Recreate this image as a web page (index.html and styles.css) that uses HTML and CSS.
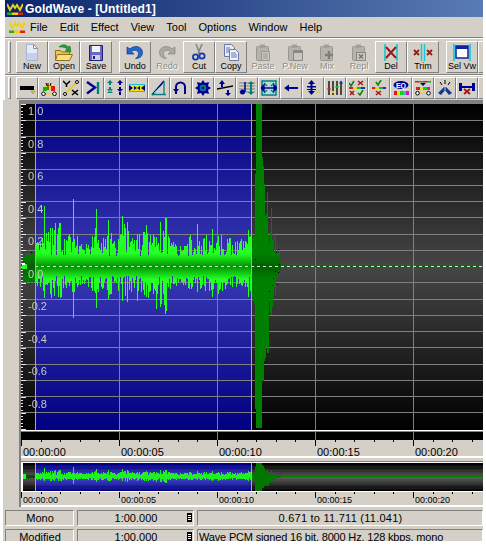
FILE: index.html
```html
<!DOCTYPE html>
<html lang="en">
<head>
    <meta charset="UTF-8">
    <title>GoldWave - [Untitled1]</title>
    <link rel="stylesheet" href="styles.css">
</head>
<body>
    <svg class="defs" width="0" height="0">
        <symbol id="logo" viewBox="0 0 16 12">
            <polyline points="0,1 3,7 6,2 8,5 10,2 13,7 16,1" fill="none" stroke="#e8d020" stroke-width="2"/>
            <rect x="0" y="9.5" width="5" height="2.5" fill="#20b020"/>
            <rect x="5" y="9.5" width="6" height="2.5" fill="#f0d000"/>
            <rect x="11" y="9.5" width="5" height="2.5" fill="#e02010"/>
        </symbol>
        <symbol id="i-new" viewBox="0 0 20 17">
            <path d="M4.5.5h7l4 4v12h-11z" fill="#e4ecfa" stroke="#a8b4d0"/>
            <path d="M11.5.5v4h4z" fill="#fff" stroke="#8090b0"/>
            <rect x="5" y="9" width="10" height="7" fill="#c4d2ee"/>
        </symbol>
        <symbol id="i-open" viewBox="0 0 20 17">
            <path d="M1.5 6.500h5l1 1.500h8v8h-14z" fill="#f0c850" stroke="#907020"/>
            <path d="M1.500 16.500l2-6h15l-3 6z" fill="#fce080" stroke="#907020"/>
            <path d="M5 3c3-3 7-3 9 0l2-1 1 6-6-1 2-2c-2-2-5-2-8-2z" fill="#20a030" stroke="#107018" stroke-width=".5"/>
        </symbol>
        <symbol id="i-save" viewBox="0 0 20 17">
            <path d="M3.500 1.500h13v15h-13z" fill="#6868c8" stroke="#202080"/>
            <rect x="6" y="2" width="8" height="6" fill="#f4f4f4"/>
            <rect x="6" y="11" width="8" height="5" fill="#d0d0d8"/>
            <rect x="7" y="12" width="2" height="3" fill="#202080"/>
        </symbol>
        <symbol id="i-undo" viewBox="0 0 20 17">
            <path d="M2 3v7h7l-2.500-2.500c3-2.500 7-1 7 2 0 2-1 4-3 5 5 0 7-3 7-6 0-6-8-8-12.500-3.500z" fill="#2068d0" stroke="#103880" stroke-width=".7"/>
        </symbol>
        <symbol id="i-redo" viewBox="0 0 20 17">
            <path d="M18 3v7h-7l2.500-2.500c-3-2.500-7-1-7 2 0 2 1 4 3 5-5 0-7-3-7-6 0-6 8-8 12.500-3.500z" fill="#a8a8a4" stroke="#88887f" stroke-width=".7"/>
        </symbol>
        <symbol id="i-cut" viewBox="0 0 20 17">
            <path d="M7 0l4 10M13 0l-4 10" stroke="#808890" stroke-width="1.600" fill="none"/>
            <circle cx="6.500" cy="13" r="2.600" fill="none" stroke="#1838b0" stroke-width="1.800"/>
            <circle cx="13" cy="12" r="2.600" fill="none" stroke="#1838b0" stroke-width="1.800"/>
        </symbol>
        <symbol id="i-copy" viewBox="0 0 20 17">
            <path d="M3.500.5h7l3 3v9h-10z" fill="#e4ecfa" stroke="#6878a8"/>
            <path d="M8.500 5.500h6l3 3v8h-9z" fill="#f0f4fc" stroke="#6878a8"/>
            <path d="M10 9h5M10 11h6M10 13h6M5 4h4M5 6h3M5 8h3" stroke="#6878a8"/>
        </symbol>
        <symbol id="i-clip" viewBox="0 0 20 17">
            <rect x="3.500" y="2.500" width="12" height="14" rx="1" fill="#b4b4ae" stroke="#989890"/>
            <rect x="7" y="0.500" width="5" height="3.500" fill="#a0a09a"/>
        </symbol>
        <symbol id="i-paste" viewBox="0 0 20 17">
            <use href="#i-clip"/>
            <path d="M8.500 7.500h8v9h-8z" fill="#c8c8c2" stroke="#989890"/>
            <path d="M10 10h5M10 12h5M10 14h5" stroke="#989890"/>
        </symbol>
        <symbol id="i-pnew" viewBox="0 0 20 17">
            <use href="#i-clip"/>
            <path d="M8.500 6.500h9v10h-9z" fill="#c8c8c2" stroke="#888880"/>
            <rect x="9" y="7" width="8" height="2" fill="#888880"/>
        </symbol>
        <symbol id="i-mix" viewBox="0 0 20 17">
            <use href="#i-clip"/>
            <path d="M12 7v8M8 11h8" stroke="#808078" stroke-width="2.400"/>
        </symbol>
        <symbol id="i-repl" viewBox="0 0 20 17">
            <use href="#i-clip"/>
            <rect x="7.500" y="8.500" width="9" height="8" fill="#c8c8c2" stroke="#888880"/>
            <path d="M10 10.500l4 4M14 10.500l-4 4" stroke="#707068" stroke-width="1.300"/>
        </symbol>
        <symbol id="i-del" viewBox="0 0 20 17">
            <path d="M4 0v17M16 0v17" stroke="#10c8d8" stroke-width="1.600"/>
            <path d="M5 3l10 11M15 3l-10 11" stroke="#a01818" stroke-width="2"/>
        </symbol>
        <symbol id="i-trim" viewBox="0 0 20 17">
            <path d="M8.500 0v17M11.500 0v17" stroke="#10c8d8" stroke-width="1.400"/>
            <path d="M1 6l5 5M6 6l-5 5M14 6l5 5M19 6l-5 5" stroke="#a01818" stroke-width="1.900"/>
        </symbol>
        <symbol id="i-selvw" viewBox="0 0 20 17">
            <path d="M2 0v17M18 0v17" stroke="#10c8d8" stroke-width="1.600"/>
            <rect x="4" y="2" width="12" height="12" fill="#fff" stroke="#1020a0" stroke-width="1.500"/>
            <rect x="4" y="2" width="12" height="3" fill="#1020a0"/>
        </symbol>

        <symbol id="t-bar" viewBox="0 0 16 16">
            <rect x="1" y="6" width="14" height="4" fill="#000"/>
            <path d="M12 11h4l-2 3z" fill="#e8d020" stroke="#807010" stroke-width=".4"/>
        </symbol>
        <symbol id="t-fade" viewBox="0 0 16 16">
            <path d="M3 10a5 6 0 0 1 10 0z" fill="#f0d810"/>
            <path d="M2 7h4v4h-4z" fill="#10b010"/>
            <path d="M10 6h4v5h-4z" fill="#e01818"/>
            <path d="M7 3v7M5 3l1 3M10 3l-1 3" stroke="#000"/>
            <rect x="3" y="13" width="10" height="1.500" fill="#f0d810"/>
            <circle cx="2.500" cy="13.800" r="1.800" fill="#fff" stroke="#000"/>
            <circle cx="13.500" cy="13.800" r="1.800" fill="#fff" stroke="#000"/>
        </symbol>
        <symbol id="t-cross" viewBox="0 0 16 16">
            <path d="M0 1l3.500 3.500L7 1M3.500 4.500V7" stroke="#000" stroke-width="1.500" fill="none"/>
            <path d="M3 13l10-10" stroke="#e8d020" stroke-width="2"/>
            <path d="M9 10l6 5M15 10l-6 5" stroke="#000" stroke-width="1.600"/>
            <circle cx="2" cy="14" r="1.500" fill="#fff" stroke="#000"/>
            <circle cx="14" cy="2" r="1.500" fill="#fff" stroke="#000"/>
        </symbol>
        <symbol id="t-end" viewBox="0 0 16 16">
            <path d="M2 2l8 5.500-8 6" fill="none" stroke="#000090" stroke-width="2.400"/>
            <path d="M13 2v12" stroke="#008080" stroke-width="2.400"/>
        </symbol>
        <symbol id="t-arrows" viewBox="0 0 16 16">
            <path d="M0 3l3-3 3 3zM0 9l3 3 3-3zM0 13l3-3 3 3" fill="#008080"/>
            <path d="M2 3h2v2h-2zM2 7h2v2h-2z" fill="#008080"/>
            <path d="M10 3l3-3 3 3zM10 9l3 3 3-3z" fill="#000090"/>
            <path d="M12 3h2v2h-2zM12 7h2v2h-2zM12 12h2v3h-2z" fill="#000090"/>
        </symbol>
        <symbol id="t-bow" viewBox="0 0 16 16">
            <rect x="0" y="5" width="16" height="6" fill="#f0e000"/>
            <path d="M0 5l4 3-4 3zM16 5l-4 3 4 3z" fill="#000090"/>
            <path d="M5 6l3 2 3-2v4l-3-2-3 2z" fill="#000090"/>
            <path d="M0 4.500h16M0 11.500h16" stroke="#10c8d8"/>
        </symbol>
        <symbol id="t-ramp" viewBox="0 0 16 16">
            <path d="M1 15l12-14" stroke="#000090" stroke-width="1.600"/>
            <path d="M1 14.500h14M13 2v13" stroke="#008080" stroke-width="1.300"/>
            <path d="M3 13l6-6" stroke="#80c0c0"/>
        </symbol>
        <symbol id="t-turn" viewBox="0 0 16 16">
            <path d="M3 14v-7a4.500 4.500 0 0 1 9 0v7" fill="none" stroke="#000090" stroke-width="2"/>
            <path d="M0 9l3 4 3-4z" fill="#000090"/>
        </symbol>
        <symbol id="t-gear" viewBox="0 0 16 16">
            <path d="M8 0l2 3 4-1-1 4 3 2-3 2 1 4-4-1-2 3-2-3-4 1 1-4-3-2 3-2-1-4 4 1z" fill="#000090"/>
            <circle cx="8" cy="8" r="3.300" fill="#008090"/>
            <circle cx="8" cy="8" r="1.300" fill="#000090"/>
        </symbol>
        <symbol id="t-flip" viewBox="0 0 16 16">
            <path d="M2 4l3-4 3 4zM4 4h2v3h-2zM8 13l3 3 3-3zM10 10h2v3h-2z" fill="#000090"/>
            <path d="M0 9l16-3" stroke="#000" stroke-width="1.300"/>
        </symbol>
        <symbol id="t-eq" viewBox="0 0 16 16">
            <path d="M0 3h16M0 6h16M0 9h16M0 12h16" stroke="#606060" stroke-width=".7"/>
            <path d="M6 2v10" stroke="#000090" stroke-width="1.500"/>
            <circle cx="3.500" cy="12" r="2.500" fill="#000090"/>
            <path d="M9 4l3-3 3 3zM9 12l3 3 3-3zM11 4h2v8h-2z" fill="#008080"/>
        </symbol>
        <symbol id="t-fit" viewBox="0 0 16 16">
            <rect x="1" y="1" width="14" height="14" fill="#b8d8d4" stroke="#008080" stroke-width="1.500"/>
            <path d="M3 3l3 3M13 3l-3 3M3 13l3-3M13 13l-3-3" stroke="#008080" stroke-width="1.300"/>
            <path d="M0 8h16M3 5l-3 3 3 3zM13 5l3 3-3 3z" stroke="#000090" stroke-width="1.400" fill="#000090"/>
        </symbol>
        <symbol id="t-left" viewBox="0 0 16 16">
            <path d="M1 8l5-3.500v2.500h9v2h-9v2.500z" fill="#000090"/>
        </symbol>
        <symbol id="t-updown" viewBox="0 0 16 16">
            <path d="M3 4l3.500-4 3.500 4zM3 11l3.500 4 3.500-4z" fill="#000090"/>
            <path d="M5.500 3h2v9h-2zM2 6h9v1.500h-9zM2 9h9v1h-9z" fill="#000090"/>
            <path d="M11 11h5l-2.500 3z" fill="#e8d020"/>
        </symbol>
        <symbol id="t-sliders" viewBox="0 0 16 16">
            <path d="M2 1v14M6 1v14M10 1v14M14 1v14" stroke="#000" stroke-width="1.300"/>
            <rect x="0.500" y="8" width="3" height="2" fill="#e01818"/>
            <rect x="4.500" y="11" width="3" height="2" fill="#f0d810"/>
            <rect x="8.500" y="6" width="3" height="2" fill="#10b010"/>
            <rect x="12.500" y="2" width="3" height="2" fill="#2030d0"/>
        </symbol>
        <symbol id="t-checks" viewBox="0 0 16 16">
            <path d="M0 3l2 3 3-5" fill="none" stroke="#108010" stroke-width="1.500"/>
            <path d="M9 1l5 4M14 1l-5 4" stroke="#a01818" stroke-width="1.500"/>
            <rect x="0" y="7" width="4" height="2" fill="#e01818"/>
            <rect x="4" y="7" width="4" height="2" fill="#f0d810"/>
            <rect x="8" y="7" width="4" height="2" fill="#10c010"/>
            <rect x="12" y="7" width="4" height="2" fill="#2030d0"/>
            <path d="M1 11l4 4M5 11l-4 4" stroke="#a01818" stroke-width="1.500"/>
            <path d="M9 13l2 2 3-5" fill="none" stroke="#108010" stroke-width="1.500"/>
        </symbol>
        <symbol id="t-check" viewBox="0 0 16 16">
            <path d="M5 2l2 3 3-5" fill="none" stroke="#108010" stroke-width="1.600"/>
            <rect x="1" y="7" width="3.500" height="2" fill="#e01818"/>
            <rect x="4.500" y="7" width="3.500" height="2" fill="#f0d810"/>
            <rect x="8" y="7" width="3.500" height="2" fill="#10c010"/>
            <rect x="11.500" y="7" width="3.500" height="2" fill="#2030d0"/>
            <path d="M5 11l5 4M10 11l-5 4" stroke="#a01818" stroke-width="1.600"/>
        </symbol>
        <symbol id="t-eqoval" viewBox="0 0 16 16">
            <ellipse cx="8" cy="5" rx="7.500" ry="4" fill="#000090"/>
            <text x="8" y="8" text-anchor="middle" class="oval-text">EQ</text>
            <rect x="1" y="11" width="3" height="4" fill="#e01818"/>
            <rect x="4" y="11" width="3" height="4" fill="#f0e010"/>
            <rect x="7" y="11" width="3" height="4" fill="#10d010"/>
            <rect x="10" y="11" width="3" height="4" fill="#10c8d8"/>
            <rect x="13" y="11" width="3" height="4" fill="#e010c0"/>
        </symbol>
        <symbol id="t-stack" viewBox="0 0 16 16">
            <path d="M0 1h4v1.500h-4zM8 1h4v1.500h-4z" fill="#e01818"/>
            <path d="M4 1h4v1.500h-4zM12 1h4v1.500h-4z" fill="#10b010"/>
            <path d="M5 3h6l-3 3z" fill="#000090"/>
            <rect x="1" y="7" width="4" height="3" fill="#e01818"/>
            <rect x="5" y="7" width="3" height="3" fill="#f0e010"/>
            <rect x="8" y="7" width="4" height="3" fill="#10d010"/>
            <rect x="12" y="7" width="3" height="3" fill="#e010c0"/>
            <rect x="3" y="12.500" width="10" height="1.500" fill="#f0d810"/>
            <circle cx="2.500" cy="13.200" r="1.800" fill="#fff" stroke="#000"/>
            <circle cx="13.500" cy="13.200" r="1.800" fill="#fff" stroke="#000"/>
        </symbol>
        <symbol id="t-merge" viewBox="0 0 16 16">
            <path d="M1 13l6-6 2 2-5 6zM15 13l-6-6-2 2 5 6z" fill="#103890"/>
            <path d="M8 0v4M3 2l2 3M13 2l-2 3" stroke="#000"/>
        </symbol>
        <symbol id="t-squeeze" viewBox="0 0 16 16">
            <path d="M0 3h3v8h-3zM13 3h3v8h-3zM3 6h10v2h-10z" fill="#000090"/>
            <path d="M5 9l6 5M11 9l-6 5" stroke="#a01818" stroke-width="1.800"/>
        </symbol>
        <symbol id="t-more" viewBox="0 0 16 16">
            <path d="M5 3l3 4-3 4zM7 6h6v2h-6z" fill="#000090"/>
        </symbol>
    </svg>

    <div class="app">
        <div class="titlebar">
            <svg class="logo"><use href="#logo"/></svg>
            <span>GoldWave - [Untitled1]</span>
        </div>
        <div class="menubar">
            <svg class="logo"><use href="#logo"/></svg>
            <a>File</a><a>Edit</a><a>Effect</a><a>View</a><a>Tool</a><a>Options</a><a>Window</a><a>Help</a>
        </div>
        <div class="toolbar main-tools">
            <div class="grip"></div>
            <div class="btn"><svg><use href="#i-new"/></svg>New</div>
            <div class="btn"><svg><use href="#i-open"/></svg>Open</div>
            <div class="btn"><svg><use href="#i-save"/></svg>Save</div>
            <div class="tool-gap"></div>
            <div class="btn"><svg><use href="#i-undo"/></svg>Undo</div>
            <div class="btn off"><svg><use href="#i-redo"/></svg>Redo</div>
            <div class="btn"><svg><use href="#i-cut"/></svg>Cut</div>
            <div class="btn"><svg><use href="#i-copy"/></svg>Copy</div>
            <div class="btn off"><svg><use href="#i-paste"/></svg>Paste</div>
            <div class="btn off"><svg><use href="#i-pnew"/></svg>P.New</div>
            <div class="btn off"><svg><use href="#i-mix"/></svg>Mix</div>
            <div class="btn off"><svg><use href="#i-repl"/></svg>Repl</div>
            <div class="btn"><svg><use href="#i-del"/></svg>Del</div>
            <div class="btn"><svg><use href="#i-trim"/></svg>Trim</div>
            <div class="tool-gap"></div>
            <div class="btn"><svg><use href="#i-selvw"/></svg>Sel Vw</div>
            <div class="btn"></div>
        </div>
        <div class="toolbar effect-tools">
            <div class="grip"></div>
            <div class="tbtn"><svg><use href="#t-bar"/></svg></div>
            <div class="tbtn"><svg><use href="#t-fade"/></svg></div>
            <div class="tbtn"><svg><use href="#t-cross"/></svg></div>
            <div class="tbtn"><svg><use href="#t-end"/></svg></div>
            <div class="tbtn"><svg><use href="#t-arrows"/></svg></div>
            <div class="tbtn"><svg><use href="#t-bow"/></svg></div>
            <div class="tbtn"><svg><use href="#t-ramp"/></svg></div>
            <div class="tbtn"><svg><use href="#t-turn"/></svg></div>
            <div class="tbtn"><svg><use href="#t-gear"/></svg></div>
            <div class="tbtn"><svg><use href="#t-flip"/></svg></div>
            <div class="tbtn"><svg><use href="#t-eq"/></svg></div>
            <div class="tbtn"><svg><use href="#t-fit"/></svg></div>
            <div class="tbtn"><svg><use href="#t-left"/></svg></div>
            <div class="tbtn"><svg><use href="#t-updown"/></svg></div>
            <div class="tbtn"><svg><use href="#t-sliders"/></svg></div>
            <div class="tbtn"><svg><use href="#t-checks"/></svg></div>
            <div class="tbtn"><svg><use href="#t-check"/></svg></div>
            <div class="tbtn"><svg><use href="#t-eqoval"/></svg></div>
            <div class="tbtn"><svg><use href="#t-stack"/></svg></div>
            <div class="tbtn"><svg><use href="#t-merge"/></svg></div>
            <div class="tbtn"><svg><use href="#t-squeeze"/></svg></div>
            <div class="tbtn"><svg><use href="#t-more"/></svg></div>
        </div>

        <div class="workspace">
            <div class="views">
                <div class="wave">
                    <canvas id="waveCanvas" width="462" height="336"></canvas>
                    <div class="amp-labels">
                        <span>1.0</span><span>0.8</span><span>0.6</span><span>0.4</span><span>0.2</span>
                        <span>0.0</span><span>-0.2</span><span>-0.4</span><span>-0.6</span><span>-0.8</span>
                    </div>
                    <div class="marker sel-start"></div>
                    <div class="marker sel-end"></div>
                </div>
                <div class="ruler">
                    <span>00:00:00</span><span>00:00:05</span><span>00:00:10</span><span>00:00:15</span><span>00:00:20</span>
                </div>
                <div class="view-gap"></div>
                <canvas id="overviewCanvas" width="462" height="30"></canvas>
                <div class="ruler small">
                    <span>00:00:00</span><span>00:00:05</span><span>00:00:10</span><span>00:00:15</span><span>00:00:20</span>
                </div>
            </div>
        </div>

        <div class="statusbar">
            <div class="cell center">Mono</div>
            <div class="cell center">1:00.000<i class="doc"></i></div>
            <div class="cell center wide-text">0.671 to 11.711 (11.041)</div>
            <div class="cell center">Modified</div>
            <div class="cell center">1:00.000<i class="doc"></i></div>
            <div class="cell tight-text">Wave PCM signed 16 bit, 8000 Hz, 128 kbps, mono</div>
        </div>
    </div>
    <script src="wave.js"></script>
</body>
</html>
```

FILE: styles.css
```css
html, body {
    margin: 0;
    padding: 0;
    background-color: #ffffff;
}
body {
    font-family: "Liberation Sans", Arial, sans-serif;
    font-size: 11px;
    color: #000000;
}
.defs {
    position: absolute;
}
.app {
    width: 483px;
    height: 541px;
    display: flex;
    flex-direction: column;
    overflow: hidden;
}
.titlebar {
    height: 17px;
    margin-left: 5px;
    display: flex;
    align-items: center;
    gap: 2px;
    padding-left: 2px;
    background: linear-gradient(to right, #0a246a, #5a7cb4);
    color: #ffffff;
    font-size: 12px;
    letter-spacing: 0.12px;
    font-weight: bold;
    flex: none;
}
.logo {
    width: 16px;
    height: 12px;
    flex: none;
}
.menubar {
    height: 21px;
    margin-left: 5px;
    display: flex;
    align-items: center;
    padding-left: 4px;
    background-color: #d4d0c8;
    border-bottom: 1px solid #808080;
    box-sizing: border-box;
    flex: none;
}
.menubar a {
    padding: 0 6px;
}
.menubar .logo {
    margin-right: -1px;
}
.toolbar {
    margin-left: 5px;
    display: flex;
    align-items: flex-start;
    padding-left: 3px;
    background-color: #d4d0c8;
    box-sizing: border-box;
    border-top: 1px solid #ffffff;
    overflow: hidden;
    flex: none;
}
.main-tools {
    height: 37px;
    padding-top: 2px;
    border-bottom: 1px solid #808080;
    font-size: 9px;
}
.effect-tools {
    height: 25px;
    padding-top: 1px;
}
.grip {
    width: 1px;
    height: 30px;
    margin-right: 5px;
    border: 1px solid;
    border-color: #ffffff #808080 #808080 #ffffff;
    flex: none;
}
.effect-tools .grip {
    height: 20px;
}
.tool-gap {
    width: 7px;
    flex: none;
}
.btn, .tbtn {
    flex: none;
    box-sizing: border-box;
    border: 1px solid;
    border-color: #ffffff #808080 #808080 #ffffff;
    background-color: #d4d0c8;
}
.btn {
    width: 32px;
    height: 32px;
    display: flex;
    flex-direction: column;
    align-items: center;
    line-height: 10px;
    white-space: nowrap;
}
.btn svg {
    width: 20px;
    height: 17px;
    flex: none;
    margin-top: 2px;
}
.btn.off {
    border-color: #d4d0c8;
    color: #8c8c86;
    text-shadow: 1px 1px 0 #ffffff;
}
.tbtn {
    width: 22px;
    height: 22px;
    display: flex;
    align-items: center;
    justify-content: center;
}
.tbtn svg {
    width: 16px;
    height: 16px;
}
.oval-text {
    font-size: 7px;
    font-weight: bold;
    fill: #ffffff;
}
.workspace {
    flex: none;
    margin-left: 3px;
    padding-left: 16px;
    background-color: #d4d0c8;
}
.views {
    border-left: 2px solid #808080;
    border-top: 4px solid #808080;
    width: 462px;
}
.views canvas {
    display: block;
}
.wave {
    position: relative;
    height: 336px;
}
.amp-labels {
    position: absolute;
    left: 7px;
    top: 0;
    color: #c8c8c8;
    line-height: 14px;
}
.amp-labels span {
    display: block;
    height: 32.5px;
}
.marker {
    position: absolute;
    top: 0;
    width: 1px;
    height: 326px;
    background-color: #20e0f0;
}
.sel-start {
    left: 14px;
}
.sel-end {
    left: 230px;
}
.ruler {
    height: 16px;
    display: flex;
    box-sizing: border-box;
    background-image: repeating-linear-gradient(to right, #000000 0, #000000 1px, transparent 1px, transparent 19.6px);
    background-size: 100% 2px;
    background-repeat: no-repeat;
    overflow: hidden;
}
.ruler span {
    flex: none;
    width: 98px;
    box-sizing: border-box;
    padding: 8px 0 0 2px;
    line-height: 9px;
    background-image: linear-gradient(#000000, #000000);
    background-size: 1px 6px;
    background-repeat: no-repeat;
}
.ruler.small {
    height: 15px;
    border-bottom: 2px solid #ffffff;
    font-size: 9px;
}
.ruler.small span {
    padding-top: 4px;
}
.view-gap {
    height: 6px;
    box-sizing: border-box;
    border-top: 2px solid #ffffff;
    border-bottom: 1px solid #808080;
}
.statusbar {
    flex: none;
    display: grid;
    grid-template-columns: 69px 117px 286px;
    grid-auto-rows: 16px;
    gap: 3px;
    margin-left: 3px;
    padding: 3px 0 0 2px;
    background-color: #d4d0c8;
    height: 34px;
    box-sizing: border-box;
    overflow: hidden;
}
.cell {
    box-sizing: border-box;
    border: 1px solid;
    border-color: #808080 #ffffff #ffffff #808080;
    padding-left: 1px;
    line-height: 15px;
    white-space: nowrap;
    position: relative;
}
.center {
    text-align: center;
}
.wide-text {
    letter-spacing: 0.25px;
}
.tight-text {
    letter-spacing: -0.17px;
}
.doc {
    position: absolute;
    right: 1px;
    top: 2px;
    width: 3px;
    height: 7px;
    border: 1px solid #000000;
    background-image: repeating-linear-gradient(#000000 0, #000000 1px, #ffffff 1px, #ffffff 2px);
}
```

FILE: wave.js
```js
// draws the main wave view and the overview strip
var LEFT = 21;
var SEL_START = 35;
var SEL_END = 251;
var seed = 7;

function rnd() {
    seed = (seed * 16807) % 2147483647;
    return seed / 2147483647;
}

// upper envelope of the selected part, one value every 5px starting at x=35
var envelope = [16, 18, 28, 30, 34, 34, 18, 30, 24, 14, 12, 18, 32, 22, 22, 30, 14, 30, 34, 24, 20, 26, 36, 28, 40, 50, 50, 22, 16, 16, 16, 24, 14, 22, 24, 26, 16, 26, 22, 22, 16, 20, 20, 24];

// x: [up, down]
var spikes = {
    44: [60, 31], 58: [38, 30], 73: [67, 51], 77: [30, 20], 96: [57, 41], 108: [46, 32],
    122: [50, 34], 127: [44, 35], 137: [32, 34], 146: [41, 30], 160: [44, 40], 165: [48, 47],
    197: [42, 25], 212: [37, 30], 218: [30, 27], 248: [36, 30]
};

var burst = {
    252: [28, 30], 253: [30, 34], 254: [30, 36], 255: [92, 142], 256: [162, 161], 257: [162, 161],
    258: [162, 161], 259: [162, 161], 260: [162, 161], 261: [162, 161], 262: [109, 114], 263: [100, 114],
    264: [82, 94], 265: [50, 91], 266: [52, 80], 267: [74, 86], 268: [30, 86], 269: [22, 30], 270: [34, 46],
    271: [58, 48], 272: [26, 40], 273: [33, 30], 274: [14, 20], 275: [31, 28], 276: [14, 10], 277: [20, 12],
    278: [12, 8], 279: [14, 10], 280: [5, 3]
};

var columns = {};
(function buildColumns() {
    var x, i, t, base;
    for (x = 23; x < SEL_START; x++) {
        columns[x] = [9 + rnd() * 5, 10 + rnd() * 8];
    }
    for (x = SEL_START + 1; x < SEL_END; x++) {
        i = Math.min(Math.floor((x - SEL_START) / 5), envelope.length - 2);
        t = (x - SEL_START) / 5 - i;
        base = envelope[i] * (1 - t) + envelope[i + 1] * t;
        columns[x] = [10 + base * 0.9 * Math.pow(rnd(), 1.2), 9 + base * 0.7 * Math.pow(rnd(), 1.2)];
        if (rnd() < 0.12) columns[x][0] = base * 1.25;
        if (rnd() < 0.12) columns[x][1] = base * 1.0;
        if (spikes[x]) columns[x] = spikes[x];
    }
    for (x in burst) columns[x] = burst[x];
})();

function isSelected(x) {
    return x > SEL_START && x < SEL_END;
}

function mix(a, b, t) {
    t = Math.max(0, Math.min(1, t));
    return 'rgb(' + Math.round(a[0] + (b[0] - a[0]) * t) + ',' + Math.round(a[1] + (b[1] - a[1]) * t) + ',' + Math.round(a[2] + (b[2] - a[2]) * t) + ')';
}

function drawBackground(ctx, top, height, steps, dim, bright, dark, light) {
    var mid = height / 2;
    for (var y = 0; y < height; y++) {
        var t = 1 - Math.abs(y - mid) / mid;
        if (steps) t = Math.round(t * steps) / steps;
        ctx.fillStyle = mix(dim, bright, t);
        ctx.fillRect(SEL_START - LEFT, top + y, SEL_END - SEL_START, 1);
        ctx.fillStyle = mix(dark, light, t);
        ctx.fillRect(0, top + y, SEL_START - LEFT, 1);
        ctx.fillRect(SEL_END - LEFT, top + y, 462, 1);
    }
}

function drawMain() {
    var ctx = document.getElementById('waveCanvas').getContext('2d');
    var axis = 162;
    var i, x, y;
    drawBackground(ctx, 0, 326, 0, [0, 0, 128], [58, 58, 180], [0, 0, 0], [70, 70, 70]);

    ctx.fillStyle = '#808080';
    for (i = -9; i <= 9; i++) {
        ctx.fillRect(0, Math.round(axis - 16.25 * i), 462, 1);
    }
    for (i = 1; i < 5; i++) {
        ctx.fillRect(98 * i, 0, 1, 336);
    }

    for (x in columns) {
        x = +x;
        var sel = isSelected(x);
        var up = Math.round(columns[x][0]);
        var down = Math.round(columns[x][1]);
        for (y = -up; y <= down; y++) {
            var d = Math.abs(y) / 13;
            ctx.fillStyle = sel ? mix([0, 150, 0], [36, 255, 36], d) : mix([0, 96, 0], [0, 128, 0], d);
            ctx.fillRect(x - LEFT, axis + y, 1, 1);
        }
    }

    // stray black pixels in the clipped part
    ctx.fillStyle = '#000000';
    [[27, 8], [31, -14], [273, 12], [276, -14], [278, -17], [279, -2], [275, 5], [278, 6], [277, 18], [269, 25], [272, 19], [255, -7]].forEach(function(p) {
        ctx.fillRect(p[0] - LEFT, axis + p[1], 1, 1);
    });

    // centre line
    ctx.fillStyle = '#006800';
    ctx.fillRect(SEL_END - LEFT, axis, 462, 1);
    ctx.fillStyle = '#e4e4e4';
    for (x = SEL_START - LEFT; x < 462; x += 6) {
        ctx.fillRect(x, axis, 3, 1);
    }

    // amplitude ruler ticks
    ctx.fillStyle = '#e8e8e8';
    for (i = 0; i <= 100; i++) {
        y = Math.round(i * 3.25);
        if (i % 5 === 0) ctx.fillRect(0, y, 5, 1);
        else ctx.fillRect(0, y, 2, 1);
    }

    // start marker on the axis
    ctx.fillStyle = '#20ff20';
    ctx.fillRect(1, axis - 2, 5, 5);
    ctx.fillStyle = '#ffffff';
    ctx.fillRect(1, axis - 3, 3, 2);

    // bottom strip under the wave
    ctx.fillStyle = '#ffffff';
    ctx.fillRect(0, 326, 462, 1);
    ctx.fillStyle = '#808080';
    ctx.fillRect(0, 327, 462, 1);
    ctx.fillStyle = '#000000';
    ctx.fillRect(0, 328, 462, 8);
    ctx.fillStyle = '#808080';
    for (i = 1; i < 5; i++) {
        ctx.fillRect(98 * i, 328, 1, 8);
    }
}

function drawOverview() {
    var ctx = document.getElementById('overviewCanvas').getContext('2d');
    var axis = 14;
    var x;
    drawBackground(ctx, 1, 28, 7, [0, 0, 128], [70, 70, 200], [0, 0, 0], [88, 88, 88]);

    ctx.fillStyle = '#008000';
    ctx.fillRect(SEL_END - LEFT, axis, 462, 1);
    for (x in columns) {
        x = +x;
        var sel = isSelected(x);
        var scale = sel ? 0.13 : 0.1;
        ctx.fillStyle = sel ? '#20f020' : (x < SEL_START ? '#104810' : '#007800');
        var up = Math.min(14, Math.max(1, Math.round(columns[x][0] * scale)));
        var down = Math.min(14, Math.max(1, Math.round(columns[x][1] * scale)));
        ctx.fillRect(x - LEFT, axis - up, 1, up + down + 1);
    }

    ctx.fillStyle = '#20e0f0';
    ctx.fillRect(SEL_START - LEFT, 1, 1, 28);
    ctx.fillRect(SEL_END - LEFT, 1, 1, 28);
    ctx.fillStyle = '#20ff20';
    ctx.fillRect(1, axis - 2, 4, 5);
    ctx.fillStyle = '#ffffff';
    ctx.fillRect(0, 0, 462, 1);
    ctx.fillRect(0, 29, 462, 1);
    ctx.fillRect(0, 0, 2, 30);
}

drawMain();
drawOverview();
```
